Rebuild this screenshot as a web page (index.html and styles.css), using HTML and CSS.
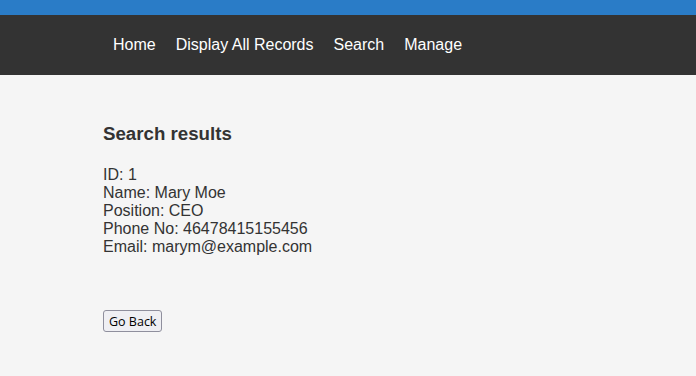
FILE: index.html
```html
<!DOCTYPE html>
<html>
<head>
<meta charset="utf-8">
<link rel="stylesheet" href="styles.css">
</head>
<body>
<div class="topbar"></div>
<nav class="nav">
  <div class="container nav-inner">
    <a href="#">Home</a>
    <a href="#">Display All Records</a>
    <a href="#">Search</a>
    <a href="#">Manage</a>
  </div>
</nav>
<main class="container main">
  <h3 class="title">Search results</h3>
  <div class="record">
    <div>ID: 1</div>
    <div>Name: Mary Moe</div>
    <div>Position: CEO</div>
    <div>Phone No: 46478415155456</div>
    <div>Email: marym@example.com</div>
  </div>
  <button class="back">Go Back</button>
</main>
</body>
</html>
```
FILE: styles.css
```css
html, body {
  margin: 0;
  padding: 0;
}
body {
  background: #f5f5f5;
  font-family: "Liberation Sans", Arial, sans-serif;
  font-size: 16px;
  color: #333;
}
.topbar {
  height: 15px;
  background: #2a7cc7;
}
.nav {
  background: #333333;
  height: 60px;
}
.container {
  width: 490px;
  margin: 0 auto;
}
.nav-inner {
  display: flex;
  align-items: center;
  height: 60px;
  padding-left: 10px;
  box-sizing: border-box;
  gap: 20px;
}
.nav-inner a {
  color: #fff;
  text-decoration: none;
  font-size: 16px;
}
.main {
  padding-top: 48px;
}
.title {
  font-size: 18.7px;
  font-weight: bold;
  margin: 0 0 21px 0;
  color: #333;
}
.record {
  line-height: 18px;
  margin-bottom: 54px;
}
.back {
  font-family: "Open Sans", "Noto Sans", sans-serif;
  font-size: 12.5px;
  color: #000;
  background: #efeff3;
  border: 1px solid #8f8f9d;
  border-radius: 3px;
  padding: 0 5px;
  height: 22px;
  display: block;
}
```
